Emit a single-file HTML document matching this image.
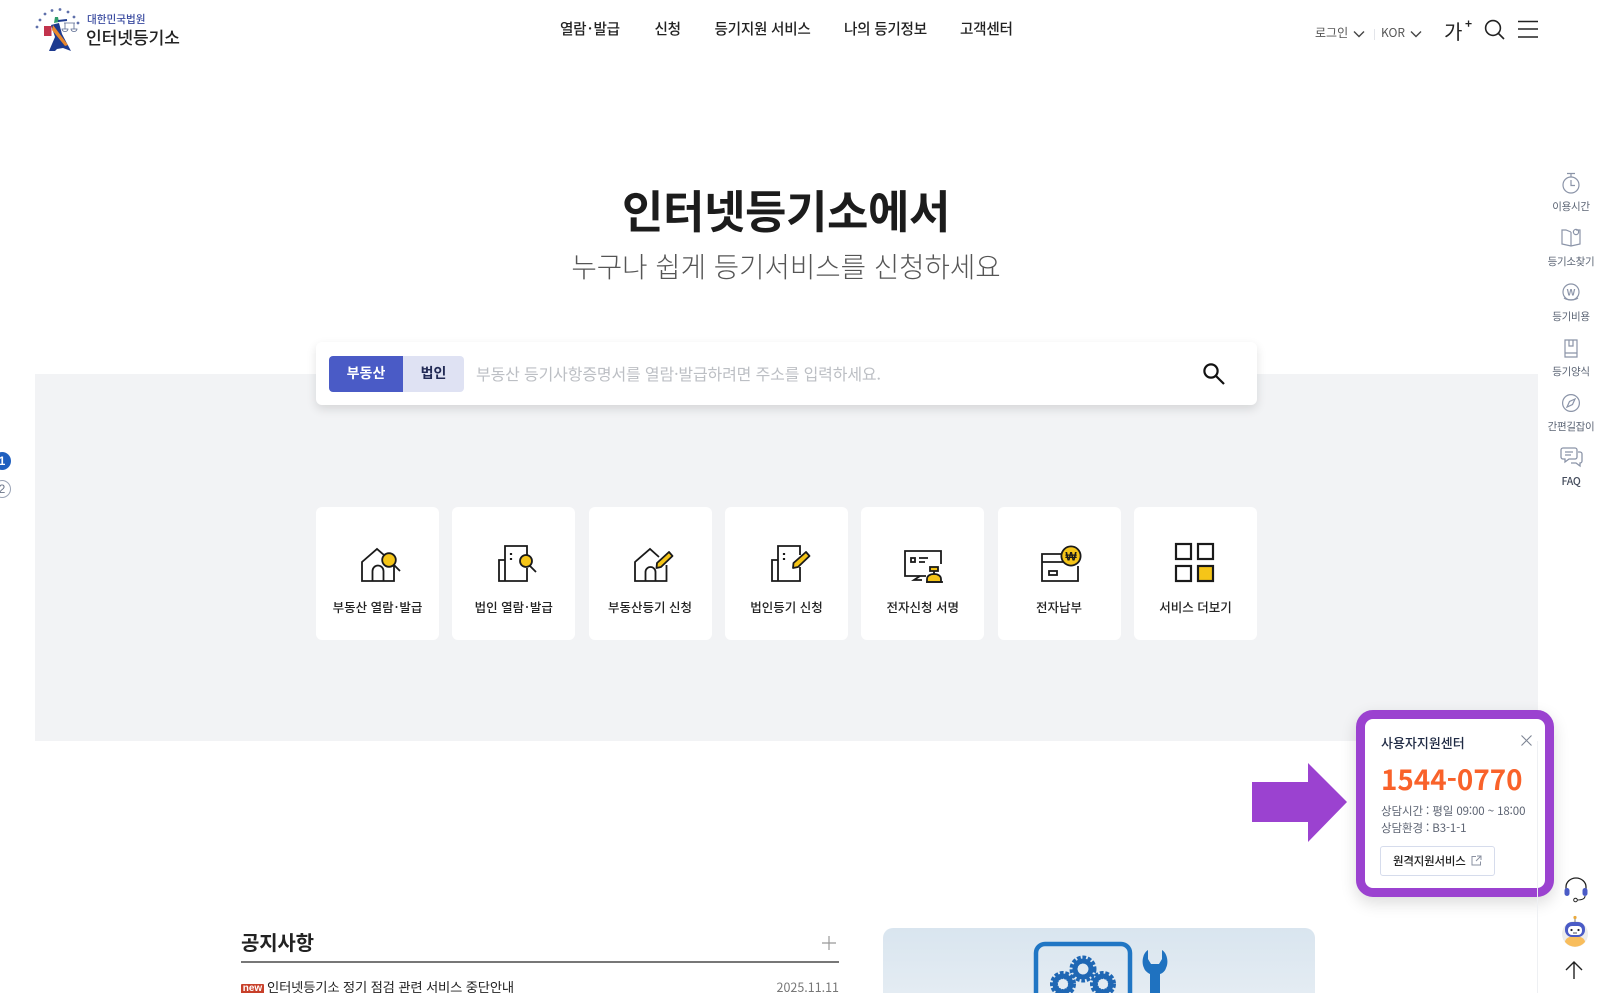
<!DOCTYPE html>
<html lang="ko"><head><meta charset="utf-8"><title>인터넷등기소</title>
<style>
*{margin:0;padding:0;box-sizing:border-box}
html,body{width:1600px;height:993px;overflow:hidden;background:#fff}
body{position:relative;font-family:"Liberation Sans","Noto Sans CJK KR",sans-serif;color:#222}
.t{position:absolute;white-space:nowrap;font-family:"Noto Sans CJK KR","Liberation Sans",sans-serif;line-height:1}
.c{transform:translateX(-50%)}
svg{position:absolute;overflow:visible}
.card{position:absolute;top:507px;width:123px;height:133px;background:#fff;border-radius:6px}
.card span{position:absolute;left:0;right:0;top:93px;text-align:center;font:500 12.5px/1.1 "Noto Sans CJK KR",sans-serif;color:#222;white-space:nowrap}
.card i{font-style:normal;margin:0 1px}
.nav{font-size:14.6px;font-weight:500;color:#222;top:22px;letter-spacing:-.25px}
.sd{font-size:10.5px;color:#5c6575;letter-spacing:-.3px}
</style></head><body>

<!-- logo -->
<svg style="left:34px;top:8px" width="50" height="46" viewBox="0 0 50 46">
<g fill="#5f70aa"><circle cx="3" cy="19" r="1.4"/><circle cx="6" cy="12" r="1.4"/><circle cx="11" cy="6" r="1.4"/><circle cx="18" cy="2.5" r="1.4"/><circle cx="26" cy="1.5" r="1.4"/><circle cx="34" cy="4" r="1.4"/><circle cx="40" cy="9" r="1.4"/><circle cx="44" cy="15" r="1.4"/></g>
<path d="M15 43 L21 29 L17 17 L25 15 L28 26 L37 43 L29 40 L23 41 L21 43Z" fill="#1d3a8f"/>
<path d="M10 18h7.500v10h-7.500z" fill="#c2334d"/><path d="M19 17 L34 37 L31 38 L18 22Z" fill="#e8862c"/>
<path d="M20 15l1-6 3 0 1 5z" fill="#2f9a6b"/><path d="M24 13 L33 12" stroke="#1d3a8f" stroke-width="2"/>
<path d="M30 15h11M31 15v6M40 15v6M28 21a3 2.500 0 0 0 6 0zM37 21a3 2.500 0 0 0 6 0z" stroke="#5a6a90" stroke-width=".8" fill="none"/>
</svg>
<div class="t" style="left:87px;top:15px;font-size:10.600px;color:#3a4ba0;font-weight:500">대한민국법원</div>
<div class="t" style="left:86px;top:28px;font-size:17.2px;font-weight:500;color:#222;letter-spacing:-.2px">인터넷등기소</div>

<!-- nav -->
<div class="t nav" style="left:560px">열람<span style="margin:0 1.5px">·</span>발급</div>
<div class="t nav" style="left:654.500px">신청</div>
<div class="t nav" style="left:714.500px">등기지원 서비스</div>
<div class="t nav" style="left:844px">나의 등기정보</div>
<div class="t nav" style="left:960px">고객센터</div>

<!-- top right -->
<div class="t" style="left:1315px;top:27px;font-size:12px;color:#555">로그인</div>
<svg style="left:1353px;top:30px" width="12" height="8"><path d="M1 1.500l5 5 5-5" fill="none" stroke="#444" stroke-width="1.400"/></svg>
<div style="position:absolute;left:1374px;top:29px;width:1px;height:11px;background:#e3e5ea"></div>
<div class="t" style="left:1381px;top:27px;font-size:12px;color:#555">KOR</div>
<svg style="left:1410px;top:30px" width="12" height="8"><path d="M1 1.500l5 5 5-5" fill="none" stroke="#444" stroke-width="1.400"/></svg>
<div class="t" style="left:1444px;top:21px;font-size:20px;color:#222">가</div>
<div class="t" style="left:1465px;top:18px;font-size:12px;font-weight:700;color:#222">+</div>
<svg style="left:1484px;top:19px" width="22" height="22" fill="none" stroke="#222" stroke-width="1.600"><circle cx="9" cy="9" r="7.400"/><path d="M14.500 14.500l5.500 5.500"/></svg>
<svg style="left:1517px;top:20px" width="22" height="20" stroke="#222" stroke-width="1.600"><path d="M1 1.500h20M1 9h20M1 17h20"/></svg>

<!-- gray band -->
<div style="position:absolute;left:35px;top:374px;width:1503px;height:367px;background:#f2f3f5"></div>

<!-- hero -->
<div class="t c" style="left:786px;top:182px;font-size:45px;font-weight:700;color:#1c1c1c;letter-spacing:-.4px;line-height:54px">인터넷등기소에서</div>
<div class="t c" style="left:786px;top:247px;font-size:27.600px;font-weight:300;color:#555;line-height:36px">누구나 쉽게 등기서비스를 신청하세요</div>

<!-- search -->
<div style="position:absolute;left:316px;top:342px;width:941px;height:63px;background:#fff;border-radius:6px;box-shadow:0 4px 10px rgba(0,0,0,.12)"></div>
<div style="position:absolute;left:329px;top:356px;width:74px;height:36px;background:#4a5bc6;border-radius:4px 0 0 4px"></div>
<div style="position:absolute;left:403px;top:356px;width:61px;height:36px;background:#dfe2f3;border-radius:0 4px 4px 0"></div>
<div class="t c" style="left:366px;top:366px;font-size:14px;font-weight:700;color:#fff">부동산</div>
<div class="t c" style="left:433.500px;top:366px;font-size:14px;font-weight:700;color:#222a55">법인</div>
<div class="t" style="left:476px;top:365px;font-size:16px;color:#bcbfc4;letter-spacing:-.15px">부동산 등기사항증명서를 열람·발급하려면 주소를 입력하세요.</div>
<svg style="left:1202px;top:362px" width="24" height="24" fill="none" stroke="#111" stroke-width="2.200"><circle cx="9" cy="9" r="6.600"/><path d="M14 14l8 8"/></svg>

<!-- cards -->
<div class="card" style="left:316px"><span>부동산 열람<i>·</i>발급</span></div>
<div class="card" style="left:452.300px"><span>법인 열람<i>·</i>발급</span></div>
<div class="card" style="left:588.500px"><span>부동산등기 신청</span></div>
<div class="card" style="left:725px"><span>법인등기 신청</span></div>
<div class="card" style="left:861.300px"><span>전자신청 서명</span></div>
<div class="card" style="left:997.500px"><span>전자납부</span></div>
<div class="card" style="left:1134px;width:123px"><span>서비스 더보기</span></div>

<!-- card icons -->
<svg style="left:0;top:0" width="1600" height="993" fill="none" stroke="#1a1a1a" stroke-width="1.800">
<!-- house search -->
<g transform="translate(361,549)"><path d="M33 14V32H1V13L16 0 23 6"/><path d="M11.500 32V22a5.500 5.500 0 0 1 11 0V32"/><circle cx="28" cy="11" r="6.800" fill="#f5c518"/><path d="M33 16l6 6"/></g>
<!-- building search -->
<g transform="translate(498,545)"><path d="M7 36V1H29V11M29 23V36H1V15H7"/><path d="M13 8v2M13 13v2" stroke-width="2.200"/><circle cx="28" cy="16" r="6" fill="#f5c518"/><path d="M32 21l6 6"/></g>
<!-- house pen -->
<g transform="translate(634,549)"><path d="M32.500 16V32H1V13L16 0 25 8"/><path d="M11.500 32V23a5 5 0 0 1 10 0V32"/><path d="M23 14L35 3 38.500 7 27 18 22.500 19Z" fill="#f5c518" stroke-linejoin="round"/></g>
<!-- building pen -->
<g transform="translate(771,545)"><path d="M7 36V1H29V10M29 22V36H1V15H7"/><path d="M13 8v2M13 13v2" stroke-width="2.200"/><path d="M22.500 18L35 7 38.500 11 27 22 22 23Z" fill="#f5c518" stroke-linejoin="round"/></g>
<!-- e-sign -->
<g transform="translate(904,550)"><path d="M37 14V1H1V26H22"/><path d="M16 26l-6 4h8"/><rect x="7" y="8" width="4" height="4"/><path d="M15 8h9M15 12h6"/><rect x="26" y="17" width="8" height="4" fill="#f5c518"/><path d="M30 21v3"/><path d="M23 32v-3c0-3 3-5 7-5s7 2 7 5v3z" fill="#f5c518"/><path d="M22 32h17"/></g>
<!-- e-pay -->
<g transform="translate(1041,546)"><path d="M20 8H1V35H37V20"/><path d="M1 16H23"/><rect x="8" y="25" width="8" height="4"/><circle cx="30" cy="10" r="9.600" fill="#f5c518"/><text x="30" y="14.500" text-anchor="middle" font-size="12" font-weight="700" fill="#1a1a1a" stroke="none" font-family="Liberation Sans">₩</text></g>
<!-- grid -->
<g transform="translate(1175,543)" stroke-width="2.200"><rect x="1" y="1" width="15" height="15"/><rect x="23" y="1" width="15" height="15"/><rect x="1" y="23" width="15" height="15"/><rect x="23" y="23" width="15" height="15" fill="#f5c518"/></g>
</svg>

<!-- right side menu -->
<svg style="left:1560px;top:172px" width="22" height="24" fill="none" stroke="#8b94a8" stroke-width="1.200"><path d="M7 1.500h8M11 1.500v3"/><circle cx="11" cy="13" r="8"/><path d="M11 8v5.500h4"/></svg>
<div class="t c sd" style="left:1571px;top:202px">이용시간</div>
<svg style="left:1561px;top:228px" width="20" height="20" fill="none" stroke="#8b94a8" stroke-width="1.200"><path d="M10 4L5 2H1V16L10 18 19 16V2H15"/><path d="M10 4V18"/><circle cx="15" cy="4" r="2.600"/></svg>
<div class="t c sd" style="left:1571px;top:257px">등기소찾기</div>
<svg style="left:1561px;top:283px" width="20" height="20" fill="none" stroke="#8b94a8" stroke-width="1.200"><circle cx="10" cy="9" r="8"/><path d="M3 15a9 5 0 0 0 14 0"/><text x="10" y="12.500" text-anchor="middle" font-size="9" font-weight="700" fill="#8b94a8" stroke="none" font-family="Liberation Sans">W</text></svg>
<div class="t c sd" style="left:1571px;top:312px">등기비용</div>
<svg style="left:1563px;top:339px" width="16" height="19" fill="none" stroke="#8b94a8" stroke-width="1.200"><path d="M2 1h12v17H2z"/><path d="M2 14h12M6 1v6h4V1"/></svg>
<div class="t c sd" style="left:1571px;top:367px">등기양식</div>
<svg style="left:1561px;top:393px" width="20" height="20" fill="none" stroke="#8b94a8" stroke-width="1.200"><circle cx="10" cy="10" r="8.400"/><path d="M14 6L8.500 8.500 6 14 11.500 11.500Z"/></svg>
<div class="t c sd" style="left:1571px;top:422px">간편길잡이</div>
<svg style="left:1560px;top:447px" width="23" height="21" fill="none" stroke="#8b94a8" stroke-width="1.300"><path d="M3 1h12a2 2 0 0 1 2 2v7a2 2 0 0 1-2 2H9l-4 3v-3H3a2 2 0 0 1-2-2V3a2 2 0 0 1 2-2z"/><path d="M5 5h8M5 8h6"/><path d="M18 5h2a2 2 0 0 1 2 2v7a2 2 0 0 1-2 2v3l-4-3h-5"/></svg>
<div class="t c sd" style="left:1571px;top:477px;font-weight:500;color:#444c5c">FAQ</div>

<!-- left pager -->
<div style="position:absolute;left:-7px;top:452px;width:18px;height:18px;border-radius:50%;background:#1f5fbf;color:#fff;font:700 12px/18px 'Liberation Sans';text-align:center">1</div>
<div style="position:absolute;left:-7px;top:480px;width:18px;height:18px;border-radius:50%;background:#fff;border:1.300px solid #9aa3b5;color:#6a7488;font:400 12px/16px 'Liberation Sans';text-align:center">2</div>

<!-- notice -->
<div class="t" style="left:241px;top:931px;font-size:20px;font-weight:700;color:#222;line-height:22px;letter-spacing:-.2px">공지사항</div>
<svg style="left:822px;top:936px" width="14" height="14" stroke="#999" stroke-width="1.200"><path d="M7 0v14M0 7h14"/></svg>
<div style="position:absolute;left:241px;top:961px;width:598px;height:2px;background:#777"></div>
<div style="position:absolute;left:241px;top:984px;width:23px;height:9px;background:#c8402a;color:#fff;border-radius:1px 1px 0 0;font:700 10px/10px 'Liberation Sans';text-align:center;overflow:hidden">new</div>
<div class="t" style="left:267px;top:979px;font-size:13.300px;line-height:15px;color:#222;letter-spacing:-.17px">인터넷등기소 정기 점검 관련 서비스 중단안내</div>
<div class="t" style="right:761px;top:979px;font-size:12.500px;line-height:15px;color:#777">2025.11.11</div>

<!-- banner -->
<div style="position:absolute;left:883px;top:928px;width:432px;height:65px;background:linear-gradient(#d9e5ef,#e4ecf3);border-radius:10px 10px 0 0"></div>
<svg style="left:1000px;top:920px" width="200" height="73" viewBox="0 0 200 73" fill="none">
<path d="M36 73V33a9 9 0 0 1 9-9h76a9 9 0 0 1 9 9V73" stroke="#2076c4" stroke-width="4.500"/>
<g><circle cx="83" cy="49" r="9.500" fill="none" stroke="#1f67b4" stroke-width="8" stroke-dasharray="3 1.400"/><circle cx="83" cy="49" r="8" fill="none" stroke="#1f67b4" stroke-width="5"/>
<circle cx="63" cy="64" r="9" fill="none" stroke="#1f67b4" stroke-width="8" stroke-dasharray="3 1.400"/><circle cx="63" cy="64" r="8" fill="none" stroke="#1f67b4" stroke-width="5"/>
<circle cx="103" cy="64" r="9" fill="none" stroke="#1f67b4" stroke-width="8" stroke-dasharray="3 1.400"/><circle cx="103" cy="64" r="8" fill="none" stroke="#1f67b4" stroke-width="5"/></g>
<path d="M148 30c-5 3-7 12-4 18 1 3 4 5 6 6V73h10V54c3-1 5-3 6-6 3-6 1-15-4-18v9l-3 5h-8l-3-5z" fill="#1f72c0"/>
</svg>

<!-- arrow -->
<svg style="left:1252px;top:763px" width="96" height="80"><path d="M0 19H56V0L95 39 56 79V59H0Z" fill="#9b42d0"/></svg>

<!-- popup -->
<div style="position:absolute;left:1356px;top:710px;width:198px;height:187px;background:#fff;border:9px solid #9b42d0;border-radius:17px;box-shadow:0 6px 16px rgba(0,0,0,.14)"></div>
<div class="t" style="left:1381px;top:735px;font-size:13px;font-weight:500;color:#1f2a44;line-height:15px">사용자지원센터</div>
<svg style="left:1521px;top:735px" width="11" height="11" stroke="#7d8594" stroke-width="1.100"><path d="M.5.5l10 10M10.500.5l-10 10"/></svg>
<div class="t" style="left:1381px;top:763px;font-size:27.800px;font-weight:700;color:#f9622a;line-height:32px">1544-0770</div>
<div class="t" style="left:1381px;top:804px;font-size:11.500px;color:#5d6473;line-height:15px;letter-spacing:-.1px">상담시간 : 평일 09:00 ~ 18:00</div>
<div class="t" style="left:1381px;top:821px;font-size:11.500px;color:#5d6473;line-height:15px;letter-spacing:-.1px">상담환경 : B3-1-1</div>
<div style="position:absolute;left:1380px;top:846px;width:115px;height:30px;border:1px solid #d6dcec;border-radius:3px;background:#fff"></div>
<div class="t" style="left:1393px;top:854px;font-size:11.500px;font-weight:500;color:#222;line-height:14px;letter-spacing:-.2px">원격지원서비스</div>
<svg style="left:1471px;top:855px" width="11" height="11" fill="none" stroke="#8a90a0"><path d="M5 1.500H1v8.500h8.500V6.500M6 1h4v4M10 1L5 6"/></svg>

<!-- bottom right icons -->
<div style="position:absolute;left:1537px;top:741px;width:1px;height:252px;background:#eef0f3"></div>
<svg style="left:1564px;top:877px" width="24" height="26" fill="none"><path d="M2 13V10a10 9 0 0 1 20 0v3" stroke="#222" stroke-width="1.300"/><rect x="0.500" y="11" width="5" height="8" rx="2.500" fill="#4a5bc6"/><rect x="18.500" y="11" width="5" height="8" rx="2.500" fill="#4a5bc6"/><path d="M21 19c0 3-4 4-8 4" stroke="#222"/><circle cx="11.500" cy="23" r="1.800" stroke="#222"/></svg>
<svg style="left:1562px;top:915px" width="28" height="32"><circle cx="13" cy="19" r="13" fill="#ececec"/><path d="M3 27a10 6 0 0 1 20 0 13 13 0 0 1-20 0z" fill="#f8bd5c"/><rect x="3" y="7" width="20" height="15" rx="7" fill="#4a5bc6"/><rect x="6" y="11" width="14" height="9" rx="4" fill="#fff"/><circle cx="9.500" cy="15" r="1.100" fill="#223"/><circle cx="16.500" cy="15" r="1.100" fill="#223"/><path d="M11 18h4" stroke="#223" stroke-width=".8"/><path d="M13 7V3" stroke="#777"/><circle cx="13" cy="2.500" r="1.600" fill="#e9a93c"/></svg>
<svg style="left:1565px;top:961px" width="18" height="18" fill="none" stroke="#222" stroke-width="1.400"><path d="M9 18V1M1 9l8-8 8 8"/></svg>

</body></html>
